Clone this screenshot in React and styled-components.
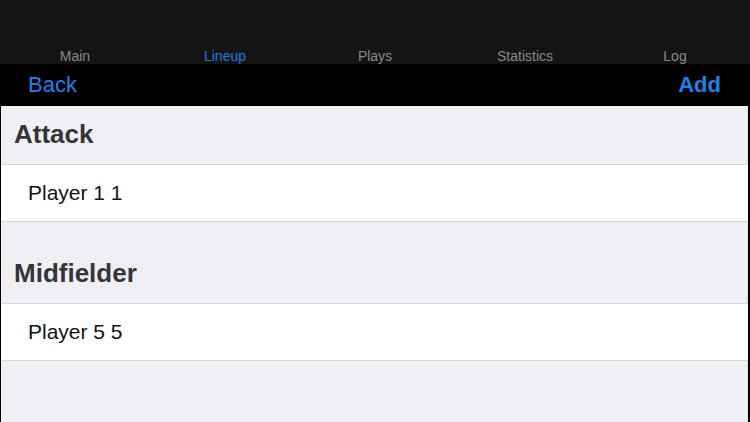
import React from "react";
import styled, { createGlobalStyle } from "styled-components";

const Global = createGlobalStyle`
  html, body { margin: 0; padding: 0; background: #000; }
  body { font-family: "Liberation Sans", Arial, sans-serif; -webkit-font-smoothing: antialiased; }
`;

const Screen = styled.div`
  width: 750px;
  height: 422px;
  display: flex;
  flex-direction: column;
  background: #000;
  overflow: hidden;
`;

const TabBar = styled.div`
  height: 64px;
  background: #141414;
  display: grid;
  grid-template-columns: repeat(5, 1fr);
  align-items: end;
`;

const Tab = styled.div`
  text-align: center;
  font-size: 14px;
  line-height: 16px;
  padding-bottom: 0;
  color: ${(p) => (p.$active ? "#1a7ae0" : "#8a8a8a")};
`;

const NavBar = styled.div`
  height: 42px;
  background: #000;
  display: flex;
  align-items: center;
  justify-content: space-between;
  padding: 0 29px 0 28px;
`;

const NavButton = styled.div`
  font-size: 22px;
  color: #1f80ec;
  font-weight: ${(p) => (p.$bold ? 700 : 400)};
  margin-top: -1px;
`;

const Content = styled.div`
  flex: 1;
  background: #efeff4;
  border-left: 1px solid #000;
  border-right: 2px solid #000;
  box-shadow: inset -1px 0 0 #dcdce0;
  display: flex;
  flex-direction: column;
`;

const SectionHeader = styled.div`
  height: ${(p) => p.$h}px;
  flex: none;
  display: flex;
  align-items: flex-end;
  padding: 0 0 14px 13px;
  box-sizing: border-box;
  font-size: 26px;
  font-weight: 700;
  color: #353537;
  border-bottom: 1px solid #d9d9dd;
`;

const Row = styled.div`
  height: 57px;
  flex: none;
  box-sizing: border-box;
  background: #fff;
  display: flex;
  align-items: center;
  padding-left: 27px;
  font-size: 21px;
  color: #111;
  border-bottom: 1px solid #d9d9dd;
`;

const sections = [
  { title: "Attack", h: 59, players: ["Player 1 1"] },
  { title: "Midfielder", h: 82, players: ["Player 5 5"] },
];

export default function App() {
  return (
    <Screen>
      <Global />
      <TabBar>
        {["Main", "Lineup", "Plays", "Statistics", "Log"].map((t) => (
          <Tab key={t} $active={t === "Lineup"}>{t}</Tab>
        ))}
      </TabBar>
      <NavBar>
        <NavButton>Back</NavButton>
        <NavButton $bold>Add</NavButton>
      </NavBar>
      <Content>
        {sections.map((s) => (
          <React.Fragment key={s.title}>
            <SectionHeader $h={s.h}>{s.title}</SectionHeader>
            {s.players.map((p) => (
              <Row key={p}>{p}</Row>
            ))}
          </React.Fragment>
        ))}
      </Content>
    </Screen>
  );
}
